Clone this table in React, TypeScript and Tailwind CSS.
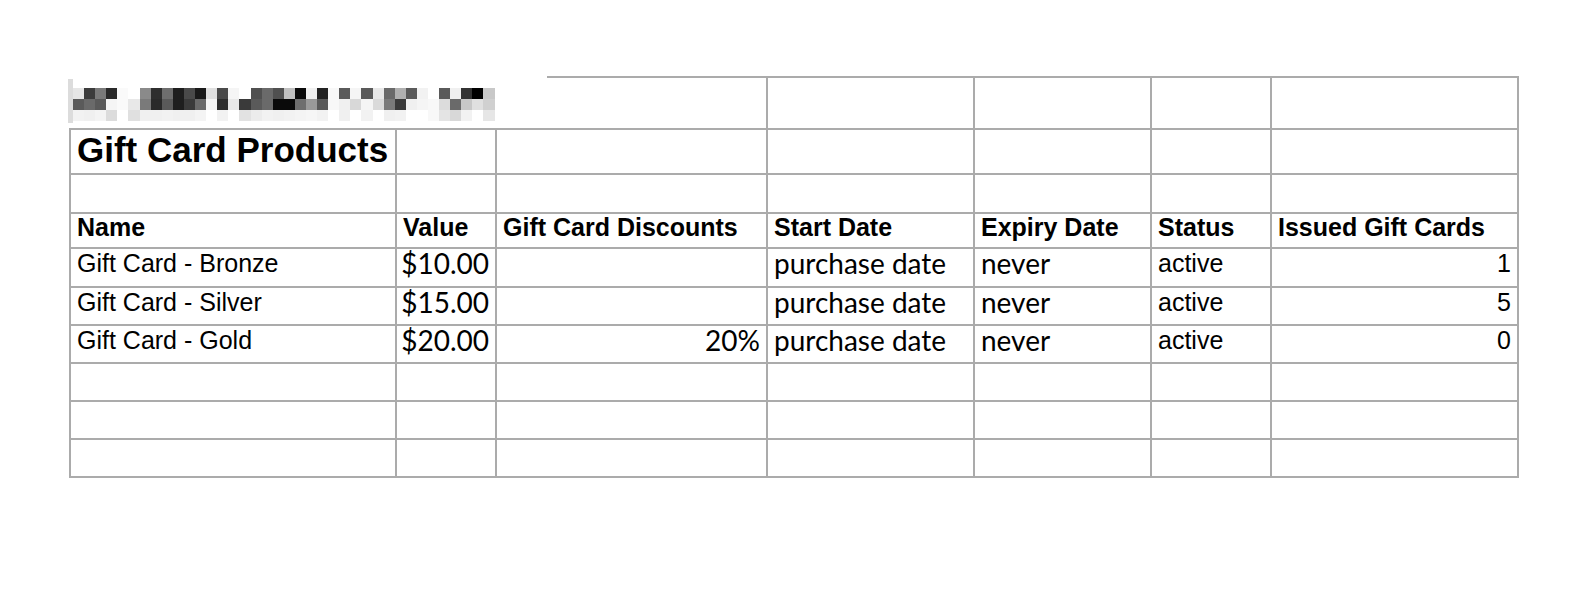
const blurRows: string[][] = [
  [
    "#e6e6e6", "#3c3c3c", "#7a7a7a", "#2a2a2a", "#fafafa", "#ffffff", "#8a8a8a", "#2e2e2e",
    "#6e6e6e", "#1e1e1e", "#4a4a4a", "#1a1a1a", "#e0e0e0", "#4a4a4a", "#f5f5f5", "#ffffff",
    "#505050", "#6a6a6a", "#505050", "#c0c0c0", "#0a0a0a", "#f0f0f0", "#222222", "#f8f8f8",
    "#5a5a5a", "#f5f5f5", "#5a5a5a", "#e8e8e8", "#6a6a6a", "#b0b0b0", "#5a5a5a", "#f2f2f2",
    "#ffffff", "#5a5a5a", "#f0f0f0", "#333333", "#000000", "#c8c8c8", "#ffffff", "#ffffff",
  ],
  [
    "#5a5a5a", "#6a6a6a", "#5a5a5a", "#f5f5f5", "#fafafa", "#e8e8e8", "#7a7a7a", "#2a2a2a",
    "#5a5a5a", "#1e1e1e", "#3a3a3a", "#6a6a6a", "#f5f5f5", "#2e2e2e", "#e8e8e8", "#3a3a3a",
    "#5a5a5a", "#6a6a6a", "#0a0a0a", "#0a0a0a", "#6e6e6e", "#9a9a9a", "#5a5a5a", "#f8f8f8",
    "#f0f0f0", "#d8d8d8", "#f5f5f5", "#dadada", "#7a7a7a", "#3a3a3a", "#f0f0f0", "#f5f5f5",
    "#f8f8f8", "#dcdcdc", "#6a6a6a", "#c8c8c8", "#e0e0e0", "#d0d0d0", "#ffffff", "#ffffff",
  ],
  [
    "#f2f2f2", "#f0f0f0", "#f4f4f4", "#dcdcdc", "#ffffff", "#e0e0e0", "#f0f0f0", "#f0f0f0",
    "#f2f2f2", "#f0f0f0", "#f0f0f0", "#f4f4f4", "#ffffff", "#f2f2f2", "#ffffff", "#e2e2e2",
    "#ececec", "#f2f2f2", "#f0f0f0", "#f2f2f2", "#f4f4f4", "#f6f6f6", "#f2f2f2", "#ffffff",
    "#f0f0f0", "#ffffff", "#f2f2f2", "#ffffff", "#f0f0f0", "#f2f2f2", "#ffffff", "#ffffff",
    "#f8f8f8", "#e4e4e4", "#d8d8d8", "#f2f2f2", "#ffffff", "#e6e6e6", "#ffffff", "#ffffff",
  ],
];

const headers = [
  "Name",
  "Value",
  "Gift Card Discounts",
  "Start Date",
  "Expiry Date",
  "Status",
  "Issued Gift Cards",
];

const products = [
  { name: "Gift Card - Bronze", value: "$10.00", discount: "", issued: "1" },
  { name: "Gift Card - Silver", value: "$15.00", discount: "", issued: "5" },
  { name: "Gift Card - Gold", value: "$20.00", discount: "20%", issued: "0" },
];

const arial = "font-['Liberation_Sans',Arial,sans-serif]";
const calibri = "font-['Lato','Open_Sans',sans-serif]";

function Cell({
  children,
  className = "",
}: {
  children?: React.ReactNode;
  className?: string;
}) {
  return (
    <div
      className={`flex items-center overflow-visible whitespace-nowrap bg-white px-[6px] text-black ${className}`}
    >
      {children}
    </div>
  );
}

function EmptyRow() {
  return (
    <>
      {headers.map((h) => (
        <Cell key={h} />
      ))}
    </>
  );
}

export default function App() {
  return (
    <div className="relative h-[604px] w-full bg-white pt-[76px] pl-[69px]">
      <div className="grid w-fit grid-cols-[324px_98px_269px_205px_175px_118px_245px] grid-rows-[50px_43px_37px_33px_37px_36px_36px_36px_36px_36px] gap-[2px] border-2 border-[#ababab] bg-[#ababab]">
        <EmptyRow />

        <Cell className={`${arial} pb-[2px] text-[35px] font-bold`}>Gift Card Products</Cell>
        {headers.slice(1).map((h) => (
          <Cell key={h} />
        ))}

        <EmptyRow />

        {headers.map((h) => (
          <Cell key={h} className={`${arial} pb-[5px] text-[25px] font-bold`}>
            {h}
          </Cell>
        ))}

        {products.map((p) => (
          <div key={p.name} className="contents">
            <Cell className={`${arial} pb-[7px] text-[25px]`}>{p.name}</Cell>
            <Cell className={`${calibri} justify-end pb-[9px] text-[28px]`}>{p.value}</Cell>
            <Cell className={`${calibri} justify-end pb-[9px] text-[28px]`}>{p.discount}</Cell>
            <Cell className={`${calibri} pb-[9px] text-[28px]`}>purchase date</Cell>
            <Cell className={`${calibri} pb-[9px] text-[28px]`}>never</Cell>
            <Cell className={`${arial} pb-[7px] text-[25px]`}>active</Cell>
            <Cell className={`${arial} justify-end pb-[7px] text-[25px]`}>{p.issued}</Cell>
          </div>
        ))}

        <EmptyRow />
        <EmptyRow />
        <EmptyRow />
      </div>

      {/* redacted caption over the top-left of the sheet */}
      <div className="absolute top-[74px] left-[66px] h-[54px] w-[481px] bg-white">
        <div className="absolute top-[5px] left-[2px] h-[44px] w-[5px] bg-[#dcdcdc]" />
        <div className="absolute top-[14px] left-[7px] flex flex-col">
          {blurRows.map((row, i) => (
            <div key={i} className="flex h-[11px]">
              {row.map((c, j) => (
                <div key={j} className="h-full w-[11.1px]" style={{ backgroundColor: c }} />
              ))}
            </div>
          ))}
        </div>
      </div>
    </div>
  );
}
